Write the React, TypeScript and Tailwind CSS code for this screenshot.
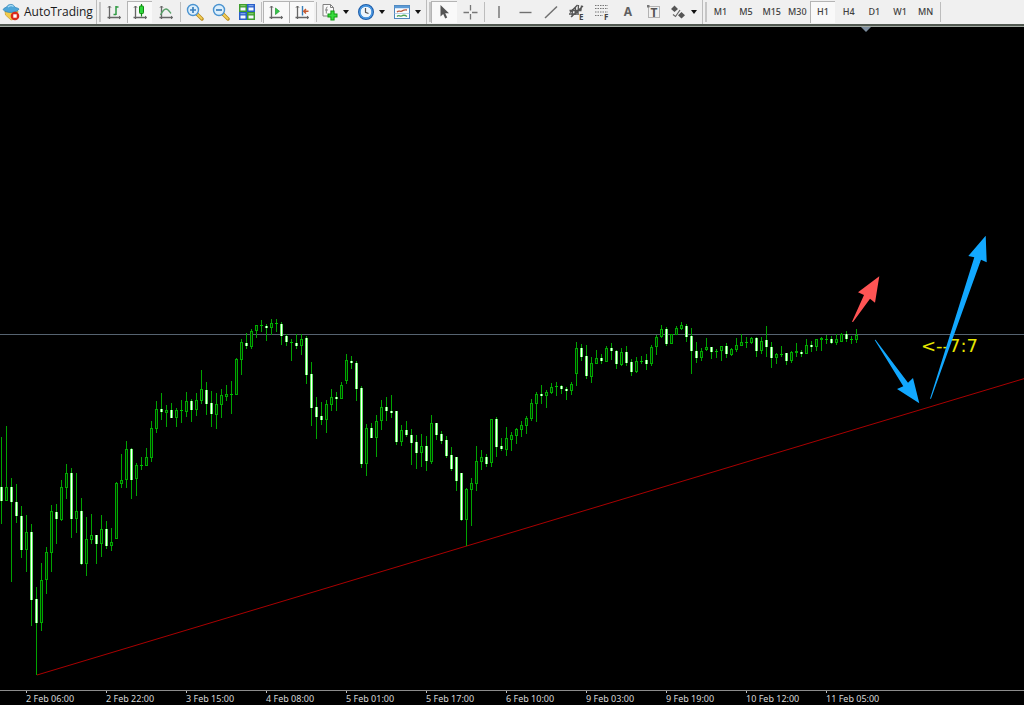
import clsx from 'clsx';
import React from 'react';

// [high, body top, body bottom, low, kind] in chart pixels
// f = bearish (filled), h = bullish (hollow), d = doji
type Kind = 'f' | 'h' | 'd';
type Candle = [number, number, number, number, Kind];

const candles: Candle[] = [
    [437, 487, 501, 524, 'f'], [426, 487, 501, 501, 'h'], [478, 487, 502, 582, 'f'], [484, 502, 516, 523, 'f'],
    [506, 516, 550, 558, 'f'], [515, 532, 550, 572, 'h'], [524, 532, 600, 626, 'f'], [587, 599, 623, 675, 'f'],
    [563, 580, 623, 631, 'h'], [547, 552, 580, 594, 'h'], [505, 511, 553, 572, 'h'], [504, 512, 519, 544, 'f'],
    [480, 487, 520, 521, 'h'], [464, 473, 488, 499, 'h'], [468, 473, 519, 538, 'f'], [473, 511, 519, 533, 'h'],
    [498, 511, 564, 565, 'f'], [517, 539, 564, 576, 'h'], [514, 535, 540, 544, 'h'], [535, 535, 544, 564, 'f'],
    [515, 529, 544, 557, 'h'], [521, 529, 546, 549, 'f'], [528, 542, 546, 551, 'h'], [482, 483, 539, 539, 'h'],
    [454, 480, 484, 488, 'h'], [441, 449, 480, 488, 'h'], [448, 449, 480, 499, 'f'], [463, 465, 479, 496, 'h'],
    [457, 465, 466, 470, 'd'], [448, 457, 466, 466, 'h'], [421, 428, 458, 462, 'h'], [401, 409, 429, 433, 'h'],
    [393, 409, 412, 420, 'f'], [405, 410, 413, 427, 'h'], [403, 410, 418, 418, 'f'], [408, 410, 418, 427, 'h'],
    [400, 410, 411, 423, 'd'], [392, 401, 412, 417, 'h'], [399, 401, 410, 422, 'f'], [393, 400, 410, 416, 'h'],
    [370, 389, 401, 404, 'h'], [382, 390, 404, 415, 'f'], [391, 403, 414, 427, 'f'], [393, 404, 415, 429, 'h'],
    [389, 395, 405, 418, 'h'], [385, 394, 397, 401, 'h'], [381, 394, 395, 414, 'd'], [358, 359, 395, 395, 'h'],
    [339, 342, 360, 375, 'h'], [333, 343, 346, 349, 'f'], [329, 331, 347, 349, 'h'], [325, 325, 331, 338, 'h'],
    [320, 325, 326, 332, 'd'], [324, 326, 328, 341, 'f'], [319, 323, 328, 335, 'h'], [319, 323, 324, 332, 'd'],
    [322, 324, 336, 345, 'f'], [334, 336, 342, 346, 'f'], [339, 342, 343, 361, 'd'], [334, 343, 346, 349, 'f'],
    [334, 339, 346, 355, 'h'], [336, 338, 375, 384, 'f'], [362, 374, 408, 426, 'f'], [397, 407, 417, 439, 'f'],
    [402, 416, 420, 425, 'f'], [400, 404, 420, 433, 'h'], [389, 397, 405, 411, 'h'], [392, 397, 399, 411, 'f'],
    [382, 385, 399, 399, 'h'], [354, 360, 381, 384, 'h'], [356, 361, 363, 369, 'f'], [361, 363, 389, 401, 'f'],
    [386, 388, 464, 468, 'f'], [424, 428, 464, 476, 'h'], [423, 428, 438, 438, 'f'], [415, 421, 438, 457, 'h'],
    [400, 407, 421, 430, 'h'], [397, 407, 411, 421, 'f'], [395, 411, 413, 418, 'f'], [411, 411, 442, 445, 'f'],
    [425, 430, 442, 446, 'h'], [421, 430, 435, 437, 'f'], [429, 435, 443, 465, 'f'], [435, 442, 453, 469, 'f'],
    [434, 446, 453, 467, 'h'], [436, 446, 461, 471, 'f'], [415, 423, 462, 464, 'h'], [423, 423, 435, 440, 'f'],
    [431, 434, 441, 444, 'f'], [436, 440, 456, 458, 'f'], [447, 455, 469, 471, 'f'], [457, 457, 481, 491, 'f'],
    [473, 473, 520, 521, 'f'], [488, 489, 520, 546, 'h'], [478, 483, 490, 526, 'h'], [446, 461, 484, 491, 'h'],
    [450, 457, 462, 470, 'h'], [454, 457, 464, 467, 'f'], [419, 419, 463, 467, 'h'], [417, 419, 447, 457, 'f'],
    [438, 446, 449, 451, 'f'], [427, 438, 450, 456, 'h'], [432, 435, 440, 451, 'h'], [428, 429, 436, 444, 'h'],
    [421, 425, 430, 437, 'h'], [416, 418, 426, 434, 'h'], [399, 403, 419, 421, 'h'], [392, 394, 404, 422, 'h'],
    [385, 394, 396, 404, 'f'], [390, 392, 396, 408, 'h'], [383, 387, 393, 394, 'h'], [382, 386, 387, 396, 'd'],
    [385, 386, 389, 394, 'f'], [387, 389, 391, 400, 'f'], [382, 384, 391, 395, 'h'], [342, 348, 374, 386, 'h'],
    [344, 348, 357, 361, 'f'], [345, 356, 376, 379, 'f'], [357, 363, 377, 383, 'h'], [350, 358, 364, 364, 'h'],
    [354, 358, 361, 364, 'f'], [346, 348, 362, 362, 'h'], [343, 348, 351, 360, 'f'], [350, 351, 364, 369, 'f'],
    [348, 352, 365, 366, 'h'], [346, 352, 363, 366, 'f'], [359, 362, 372, 376, 'f'], [357, 361, 372, 373, 'h'],
    [356, 361, 362, 364, 'd'], [354, 360, 364, 370, 'f'], [345, 347, 364, 366, 'h'], [335, 337, 347, 355, 'h'],
    [325, 329, 337, 338, 'h'], [327, 329, 344, 346, 'f'], [334, 334, 344, 344, 'h'], [326, 328, 335, 335, 'h'],
    [322, 325, 329, 330, 'h'], [324, 326, 337, 342, 'f'], [328, 336, 351, 374, 'f'], [342, 351, 358, 363, 'f'],
    [348, 351, 358, 361, 'h'], [338, 347, 350, 351, 'h'], [347, 347, 352, 359, 'f'], [349, 351, 352, 358, 'd'],
    [346, 346, 351, 361, 'h'], [343, 346, 354, 358, 'f'], [348, 349, 355, 356, 'h'], [338, 345, 350, 352, 'h'],
    [334, 342, 346, 346, 'h'], [337, 342, 343, 348, 'd'], [337, 338, 343, 344, 'h'], [337, 338, 351, 357, 'f'],
    [337, 341, 351, 354, 'h'], [326, 340, 347, 357, 'f'], [342, 347, 358, 368, 'f'], [353, 354, 358, 364, 'h'],
    [346, 354, 355, 357, 'd'], [353, 353, 361, 365, 'f'], [351, 352, 361, 363, 'h'], [343, 351, 353, 357, 'h'],
    [350, 352, 354, 357, 'f'], [339, 345, 354, 354, 'h'], [341, 345, 347, 352, 'f'], [339, 339, 347, 351, 'h'],
    [337, 338, 340, 351, 'h'], [335, 339, 340, 344, 'd'], [336, 339, 343, 344, 'f'], [334, 339, 343, 345, 'h'],
    [333, 334, 342, 342, 'h'], [331, 334, 339, 342, 'f'], [336, 339, 340, 344, 'd'], [329, 335, 340, 343, 'h'],
];

const times = [
    '2 Feb 06:00', '2 Feb 22:00', '3 Feb 15:00', '4 Feb 08:00', '5 Feb 01:00', '5 Feb 17:00',
    '6 Feb 10:00', '9 Feb 03:00', '9 Feb 19:00', '10 Feb 12:00', '11 Feb 05:00',
];

const timeframes = ['M1', 'M5', 'M15', 'M30', 'H1', 'H4', 'D1', 'W1', 'MN'];

interface ChildrenProps {
    children: React.ReactNode;
}

const Icon: React.FC<ChildrenProps> = ({ children }) => (
    <svg viewBox="0 0 18 18" className="h-[18px] w-[18px] shrink-0" fill="none" aria-hidden="true">
        {children}
    </svg>
);

const Axes = () => (
    <g stroke="#666" strokeWidth="1.3">
        <path d="M4.5 3v13M2.5 14.5h13" />
        <path d="M3 4.7 4.5 3 6 4.7M14 13l1.7 1.5L14 16" strokeWidth="1" />
    </g>
);

const AutoTradingIcon = () => (
    <Icon>
        <path d="M3 8h13l-1.5 7.5L9 17 3.500 12z" fill="#f2cc4b" stroke="#c99a25" strokeWidth=".7" />
        <path d="M1 6.500c1-2 3-1.500 4-3 1-2.500 6-3 7.500 0 .8 1.500 3 1 4.500 2.500C15.500 10 4 11 1 6.500z" fill="#4ea6d8" stroke="#2b7fb5" strokeWidth=".7" />
        <path d="M6 4c1.500-1.700 4-2 5.500-.5" stroke="#a9dcf5" strokeWidth="1.200" />
        <circle cx="13" cy="13" r="4.300" fill="#d92a1c" />
        <rect x="11.300" y="11.300" width="3.400" height="3.400" fill="#fff" />
    </Icon>
);

const BarsIcon = () => (
    <Icon>
        <Axes />
        <path d="M11 3v9M11 4h2.500M8.500 11.500H11" stroke="#2f9a43" strokeWidth="1.500" />
    </Icon>
);

const CandleIcon = () => (
    <Icon>
        <Axes />
        <path d="M10.500 1v12.500" stroke="#128a12" strokeWidth="1.200" />
        <rect x="8.500" y="3" width="4" height="7.500" rx=".8" fill="#2ed83c" stroke="#128a12" />
    </Icon>
);

const LineIcon = () => (
    <Icon>
        <Axes />
        <path d="M3.500 12C5 9 7 6 9 6s3.500 2.500 5 4.500" stroke="#58a068" strokeWidth="1.300" />
    </Icon>
);

const Magnifier: React.FC<{ plus?: boolean }> = ({ plus = false }) => (
    <Icon>
        <path d="m11 11 5 5" stroke="#b98a1c" strokeWidth="3.400" strokeLinecap="round" />
        <path d="m11.500 11.500 4.200 4.200" stroke="#f3cf58" strokeWidth="1.800" strokeLinecap="round" />
        <circle cx="7" cy="7" r="5.500" fill="#dceffc" stroke="#4a93d0" strokeWidth="1.400" />
        <path d={plus ? 'M4 7h6M7 4v6' : 'M4 7h6'} stroke="#3c80bd" strokeWidth="1.700" />
    </Icon>
);

const TileIcon = () => (
    <Icon>
        <path d="M1 1h8v8H1zM9 9h8v8H9z" fill="#3f9d2e" />
        <path d="M9 1h8v8H9zM1 9h8v8H1z" fill="#2a5fc9" />
        <path d="M2.500 4.500h5v3h-5zM10.500 4.500h5v3h-5zM2.500 12.500h5v3h-5zM10.500 12.500h5v3h-5z" fill="#f3f8ff" />
        <path d="M2.500 2.700h5M10.500 10.700h5" stroke="#8ed477" />
        <path d="M10.500 2.700h5M2.500 10.700h5" stroke="#8fb4f2" />
    </Icon>
);

const ScrollIcon = () => (
    <Icon>
        <Axes />
        <path d="M8.500 5v6.500l4-3.200z" fill="#35c548" stroke="#1f9a30" strokeWidth=".7" />
    </Icon>
);

const ShiftIcon = () => (
    <Icon>
        <Axes />
        <path d="M9.500 3v9.500" stroke="#3a7fb8" strokeWidth="1.400" />
        <path d="M10.500 8.300h5M13 6l-2.300 2.300L13 10.600" stroke="#c65a30" strokeWidth="1.400" />
    </Icon>
);

const IndicatorIcon = () => (
    <Icon>
        <path d="M2 1.500h7.500l3 3V13H2z" fill="#fafafa" stroke="#808080" />
        <path d="M9.500 1.500v3h3M6.500 4c-1.500 0-1.200 2-1.200 3.500v3M4 7h3" stroke="#808080" />
        <path d="M11.500 7.500v10M6.500 12.500h10" stroke="#119a11" strokeWidth="4.200" />
        <path d="M11.500 8.500v8M7.500 12.500h8" stroke="#36dc3d" strokeWidth="2.200" />
    </Icon>
);

const ClockIcon = () => (
    <Icon>
        <circle cx="9" cy="9" r="6.800" fill="#eef6fd" stroke="#1d5ca8" strokeWidth="2.400" />
        <circle cx="9" cy="9" r="6.200" stroke="#4a9be6" strokeWidth="1.400" />
        <path d="M8.500 5v4.300l3 1.200" stroke="#555" strokeWidth="1.200" />
    </Icon>
);

const TemplateIcon = () => (
    <Icon>
        <rect x="1.500" y="2.500" width="15" height="13" fill="#fbfdff" stroke="#4f86bc" />
        <path d="M1.500 4h15" stroke="#5d9bd6" strokeWidth="2.500" />
        <path d="M4 9c2-2 3 0 4.500-.8S11 6.500 14 7" stroke="#b9573a" strokeWidth="1.300" />
        <path d="M1.500 10.500h15" stroke="#a9c6e2" strokeWidth=".8" />
        <path d="M4 13.500c2-2.500 3 .5 4.500-.5s3-1.500 5.500.5" stroke="#4fa254" strokeWidth="1.300" />
    </Icon>
);

const CursorIcon = () => (
    <Icon>
        <path d="M5.500 2v11.500l2.700-2.400 2 4.400 2-.9-2-4.300H14z" fill="#555" />
    </Icon>
);

const CrosshairIcon = () => (
    <Icon>
        <path d="M9.500 2v5.500M9.500 11v5.500M2.500 9.500H8M11 9.500h5.500" stroke="#777" strokeWidth="1.300" />
    </Icon>
);

const VLineIcon = () => (
    <Icon>
        <path d="M9 3v12" stroke="#707070" strokeWidth="1.400" />
    </Icon>
);

const HLineIcon = () => (
    <Icon>
        <path d="M3.500 9.500h12" stroke="#707070" strokeWidth="1.400" />
    </Icon>
);

const TrendIcon = () => (
    <Icon>
        <path d="M3 15 15 3.500" stroke="#707070" strokeWidth="1.500" />
    </Icon>
);

const ChannelIcon = () => (
    <Icon>
        <path d="M2 9.500 9.500 2M3 14 15 3M1.500 7.500h12M1 11h10M4.500 6l-.5 8M7.500 4 7 12M10.500 2 10 10M13.500 2.500 13 7" stroke="#555" strokeWidth="1.300" />
        <text x="11" y="17" fill="#444" className="font-['Noto_Sans'] text-[8px] font-bold">E</text>
    </Icon>
);

const FiboIcon = () => (
    <Icon>
        <path d="M2 2.500h13M2 5.500h13M2 9h13M2 12.500h8" stroke="#777" strokeDasharray="1.500 1" />
        <text x="11" y="17" fill="#444" className="font-['Noto_Sans'] text-[8px] font-bold">F</text>
    </Icon>
);

const LabelIcon = () => (
    <Icon>
        <rect x="3.500" y="3.500" width="11" height="11" stroke="#777" strokeDasharray="1 1" />
        <path d="M2 2h2.500v2.500H2z" fill="#777" />
        <text x="5.500" y="13.500" fill="#555" className="font-['Noto_Sans'] text-xs font-bold">T</text>
    </Icon>
);

const ShapesIcon = () => (
    <Icon>
        <path d="M5.500 2.500 9 6 5.500 9 2 6zM12.500 9l3.500 3.300-3.500 3.200L9 12.300z" fill="#555" />
        <path d="m4 11.500 2.500 2L11 7" stroke="#666" strokeWidth="1.200" />
    </Icon>
);

interface ToolButtonProps extends ChildrenProps {
    label: string;
    active?: boolean;
}

const ToolButton: React.FC<ToolButtonProps> = ({ label, active = false, children }) => (
    <button
        type="button"
        aria-label={label}
        aria-pressed={active}
        className={clsx(
            'flex h-[22px] min-w-0 flex-1 items-center justify-center border-t border-l pb-px',
            active ? 'border-[#b4b4b4] bg-[#f9f9f9]' : 'border-transparent hover:bg-white',
        )}
    >
        {children}
    </button>
);

const MenuButton: React.FC<ToolButtonProps> = ({ label, children }) => (
    <button type="button" aria-label={label} aria-haspopup="menu" className="flex h-[22px] w-9 shrink-0 items-center gap-1 pl-[3px] hover:bg-white">
        {children}
        <svg viewBox="0 0 6 4" className="h-1 w-1.5 shrink-0" aria-hidden="true">
            <path d="M0 0h6L3 4z" fill="#111" />
        </svg>
    </button>
);

const Separator = () => (
    <div className="flex h-6 w-1 shrink-0 justify-center py-0.5">
        <div className="w-px bg-[#bdbdbd]" />
    </div>
);

const Grip = () => (
    <div className="flex h-6 w-[5px] shrink-0 gap-0.5">
        <div className="w-px bg-[#bcbcbc]" />
        <div className="my-0.5 w-0.5 bg-[#c6c6c6]" />
    </div>
);

const Toolbar = () => (
    <header className="flex h-6 shrink-0 items-center overflow-hidden bg-[#f0f0f0]">
        <button type="button" className="flex h-[22px] w-24 shrink-0 items-center gap-1 pl-0.5 font-['Open_Sans',sans-serif] text-xs text-[#1a1a1a]">
            <AutoTradingIcon />
            AutoTrading
        </button>
        <Grip />
        <div className="flex w-[77px] shrink-0">
            <ToolButton label="Bar chart"><BarsIcon /></ToolButton>
            <ToolButton label="Candlesticks" active><CandleIcon /></ToolButton>
            <ToolButton label="Line chart"><LineIcon /></ToolButton>
        </div>
        <Separator />
        <div className="flex w-[77px] shrink-0">
            <ToolButton label="Zoom in"><Magnifier plus /></ToolButton>
            <ToolButton label="Zoom out"><Magnifier /></ToolButton>
            <ToolButton label="Tile windows"><TileIcon /></ToolButton>
        </div>
        <Separator />
        <div className="flex w-[51px] shrink-0">
            <ToolButton label="Auto scroll" active><ScrollIcon /></ToolButton>
            <ToolButton label="Chart shift" active><ShiftIcon /></ToolButton>
        </div>
        <Separator />
        <MenuButton label="Indicators"><IndicatorIcon /></MenuButton>
        <MenuButton label="Periods"><ClockIcon /></MenuButton>
        <MenuButton label="Templates"><TemplateIcon /></MenuButton>
        <Grip />
        <div className="flex w-[51px] shrink-0">
            <ToolButton label="Cursor" active><CursorIcon /></ToolButton>
            <ToolButton label="Crosshair"><CrosshairIcon /></ToolButton>
        </div>
        <Separator />
        <div className="flex w-[180px] shrink-0">
            <ToolButton label="Vertical line"><VLineIcon /></ToolButton>
            <ToolButton label="Horizontal line"><HLineIcon /></ToolButton>
            <ToolButton label="Trendline"><TrendIcon /></ToolButton>
            <ToolButton label="Equidistant channel"><ChannelIcon /></ToolButton>
            <ToolButton label="Fibonacci retracement"><FiboIcon /></ToolButton>
            <ToolButton label="Text">
                <span className="font-['Noto_Sans',sans-serif] text-xs font-bold text-[#606060]">A</span>
            </ToolButton>
            <ToolButton label="Text label"><LabelIcon /></ToolButton>
        </div>
        <MenuButton label="Arrows"><ShapesIcon /></MenuButton>
        <Grip />
        <div className="flex w-[231px] shrink-0 font-['Noto_Sans',sans-serif] text-[9px] font-medium text-[#404040]">
            {timeframes.map((tf) => (
                <ToolButton key={tf} label={tf} active={tf === 'H1'}>{tf}</ToolButton>
            ))}
        </div>
        <Separator />
    </header>
);

const CandleShape: React.FC<{ x: number; candle: Candle }> = ({ x, candle: [high, top, bottom, low, kind] }) => (
    <g>
        <rect x={x + 1} y={high} width="1" height={Math.max(low - high, 1)} fill="#00a400" />
        {kind === 'd' && <rect x={x} y={top} width="3" height="1" fill="#00c000" />}
        {kind === 'h' && (
            <>
                <rect x={x} y={top} width="3" height={bottom - top} fill="#00aa00" />
                <rect x={x + 1} y={top + 1} width="1" height={Math.max(bottom - top - 2, 0)} fill="#002800" />
            </>
        )}
        {kind === 'f' && (
            <>
                <rect x={x} y={top} width="3" height={bottom - top} fill="#58e858" />
                <rect x={x + 1} y={top} width="1" height={bottom - top} fill="#ffffff" />
            </>
        )}
    </g>
);

const Chart = () => (
    <svg className="min-h-0 w-full flex-1" role="img" aria-label="H1 candlestick chart">
        {/* chart coordinates start at the top of the window, the toolbar takes 27px */}
        <g transform="translate(0 -27)">
            <path d="M861 27h10l-5 5z" fill="#7b8b9c" />
            <line x1="0" y1="334.5" x2="100%" y2="334.5" stroke="#566370" />
            <line x1="37" y1="675" x2="2042" y2="73" stroke="#a80000" />
            <g shapeRendering="crispEdges">
                {candles.map((candle, i) => (
                    <CandleShape key={i} x={i * 5} candle={candle} />
                ))}
            </g>
            <text x="921" y="352" fill="#e6e600" className="font-['DejaVu_Sans',sans-serif] text-[18px]">
                &lt;--7:7
            </text>
            <path d="m879.300 276.300-21.300 16 6 2.700-12 26.700 1 .3 17-23.300 5 4z" fill="#ff5454" />
            <path d="m874.700 340 28.600 46.300-6.300 2.700 22.300 14.300L913 378l-5 4.700-32.500-43z" fill="#12a8ff" />
            <path d="m930 398.700 44.300-141.400-6-1.300 17.400-20.300 1 26.600-5.700-2.600-50 139z" fill="#12a8ff" />
        </g>
    </svg>
);

const TimeAxis = () => (
    <footer className="flex h-[15px] shrink-0 overflow-hidden border-t border-[#8c8c8c] pl-[26px] font-['Noto_Sans',sans-serif] text-[9px] leading-[11px] text-[#d8d8d8]">
        {times.map((time) => (
            <div key={time} className="w-20 shrink-0 whitespace-nowrap">
                <div className="h-[2px] w-px bg-[#c0c0c0]" />
                {time}
            </div>
        ))}
    </footer>
);

export default function App() {
    return (
        <div className="flex h-screen flex-col overflow-hidden bg-black">
            <Toolbar />
            <div className="h-[3px] shrink-0 border-b border-[#a3aaa3] bg-[#525a52]" />
            <Chart />
            <TimeAxis />
        </div>
    );
}
